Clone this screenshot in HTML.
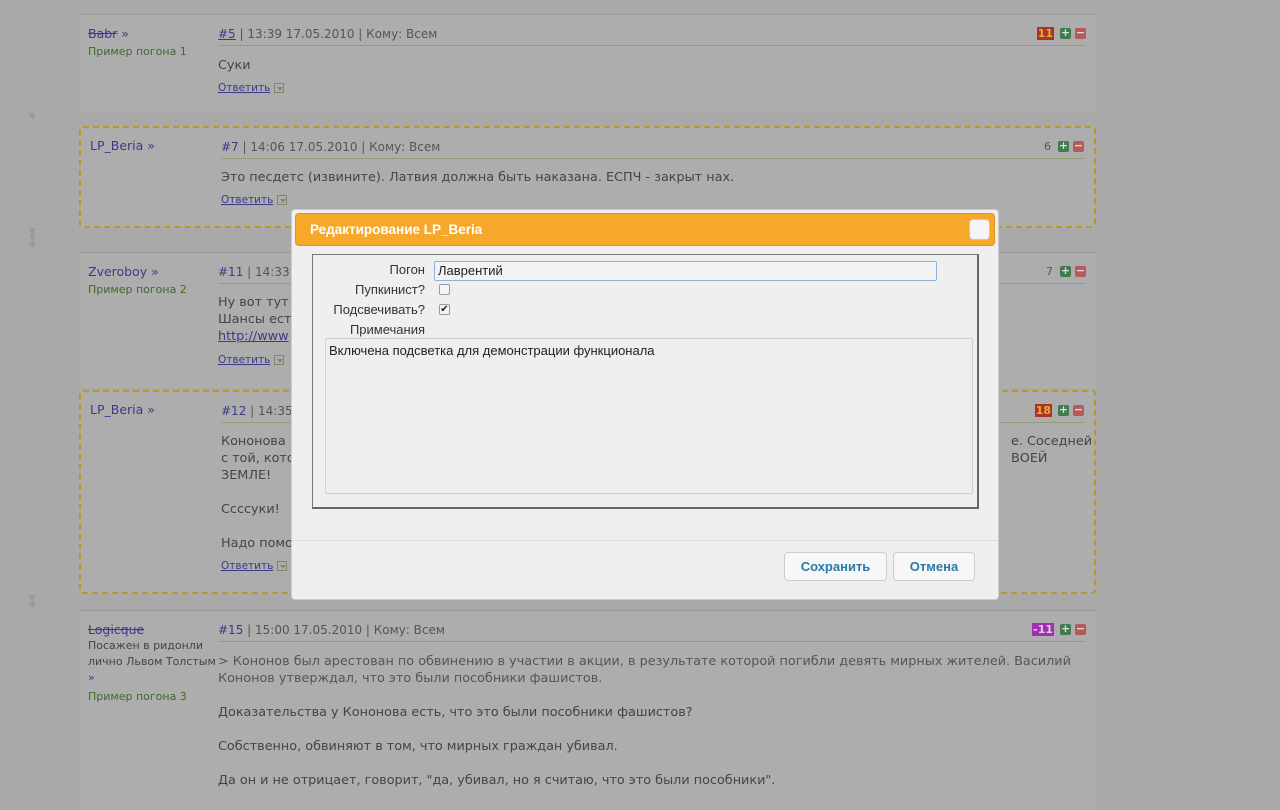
<!DOCTYPE html>
<html><head><meta charset="utf-8"><style>
*{margin:0;padding:0;box-sizing:border-box}
body{width:1280px;height:800px;background:#a9a9a9;position:relative;overflow:hidden;font-family:"DejaVu Sans","Liberation Sans",sans-serif;color:#4a4a4a}
.a{position:absolute}
.post{position:absolute;left:79px;width:1017px;background:#adadad;border-top:1px solid #999}
.dash{border:2px dashed #b59a2a;background:#adadad;border-radius:4px}
.au{position:absolute;left:9px;top:10px;font-size:12.5px;color:#3b3b8a}
.au a{color:#3b3b8a}
.pg{font-size:11px;color:#3d6b2a;margin-top:4px}
.meta{position:absolute;left:139px;right:10px;top:12px;font-size:12px;color:#555;border-bottom:1px solid #939d7a;padding-bottom:4px}
.meta a{color:#3b3b8a}
.txt{position:absolute;left:139px;font-size:12.8px;color:#444;line-height:17px}
.rep{position:absolute;left:139px;font-size:10.5px;color:#3b3b8a;text-decoration:underline}
.tri{display:inline-block;width:10px;height:10px;border:1px solid #7a8a6a;vertical-align:-2px;margin-left:4px;position:relative}
.tri:after{content:"";position:absolute;left:2px;top:3px;border:3px solid transparent;border-top:4px solid #7a8a6a}
.vt{position:absolute;right:10px;top:12px;font-size:11px;display:flex;gap:4px;align-items:center}
.num{padding:0 1px;font-weight:bold;margin-right:2px}
.pl,.mi{width:11px;height:11px;border-radius:2px;color:#ddd;font-size:11px;line-height:10px;text-align:center;font-weight:bold}
.pl{background:#3d7d4e}.mi{background:#b45a5a}
.arr{position:absolute;left:29px;color:#999;font-size:9px;line-height:7px}
.dlg{position:absolute;left:291px;top:209px;width:708px;height:391px;background:#efefef;border-radius:4px;border:1px solid #ccc;font-family:"Liberation Sans",sans-serif}
.hd{position:absolute;left:3px;top:3px;width:700px;height:33px;background:#f5a82a;border:1px solid #e09520;border-radius:4px;color:#fff;font-weight:bold;font-size:13.5px;padding:8px 14px}
.cls{position:absolute;right:4px;top:5px;width:21px;height:21px;background:#f5f5f5;border:1px solid #d8c59a;border-radius:4px}
.fs{position:absolute;left:20px;top:44px;width:667px;height:255px;border:1px solid #777;border-right:2px solid #666;border-bottom:2px solid #666}
.lb{position:absolute;font-size:13px;color:#333;text-align:right;width:110px;left:2px}
.btn{position:absolute;top:342px;height:29px;border:1px solid #ccc;border-radius:4px;background:#f7f7f7;color:#2a7aa8;font-weight:bold;font-size:13px;text-align:center;line-height:27px}
</style></head><body>

<div class="arr" style="top:114px">▼</div>
<div class="arr" style="top:229px">▼<br>▼<br>▼</div>
<div class="arr" style="top:596px">▼<br>▼</div>

<div class="post" style="top:14px;height:99px">
 <div class="au" style="top:11px"><a style="text-decoration:line-through">Babr</a> »<div class="pg">Пример погона 1</div></div>
 <div class="meta"><a href="#">#5</a> | 13:39 17.05.2010 | Кому: Всем</div>
 <div class="vt"><span class="num" style="background:#b0302a;color:#e0b030">11</span><span class="pl">+</span><span class="mi">−</span></div>
 <div class="txt" style="top:42px">Суки</div>
 <div class="rep" style="top:67px">Ответить<span class="tri"></span></div>
</div>

<div class="post dash" style="top:126px;height:102px">
 <div class="au"><a>LP_Beria</a> »</div>
 <div class="meta" style="left:140px"><a>#7</a> | 14:06 17.05.2010 | Кому: Всем</div>
 <div class="vt"><span class="num" style="font-weight:normal;color:#555">6</span><span class="pl">+</span><span class="mi">−</span></div>
 <div class="txt" style="left:140px;top:41px">Это песдетс (извините). Латвия должна быть наказана. ЕСПЧ - закрыт нах.</div>
 <div class="rep" style="left:140px;top:66px">Ответить<span class="tri"></span></div>
</div>

<div class="post" style="top:252px;height:136px">
 <div class="au" style="top:11px"><a>Zveroboy</a> »<div class="pg">Пример погона 2</div></div>
 <div class="meta"><a>#11</a> | 14:33</div>
 <div class="vt"><span class="num" style="font-weight:normal;color:#555">7</span><span class="pl">+</span><span class="mi">−</span></div>
 <div class="txt" style="top:41px">Ну вот тут<br>Шансы ест<br><span style="color:#3b3b8a;text-decoration:underline">http://www</span></div>
 <div class="rep" style="top:101px">Ответить<span class="tri"></span></div>
</div>

<div class="post dash" style="top:390px;height:204px">
 <div class="au"><a>LP_Beria</a> »</div>
 <div class="meta" style="left:140px"><a>#12</a> | 14:35</div>
 <div class="vt"><span class="num" style="background:#b0302a;color:#e0b030">18</span><span class="pl">+</span><span class="mi">−</span></div>
 <div class="txt" style="left:140px;top:41px">Кононова<br>с той, кото<br>ЗЕМЛЕ!<br><br>Ссссуки!<br><br>Надо помо</div>
 <div class="txt" style="left:930px;top:41px">е. Соседней<br>ВОЕЙ</div>
 <div class="rep" style="left:140px;top:168px">Ответить<span class="tri"></span></div>
</div>

<div class="post" style="top:610px;height:200px">
 <div class="au" style="top:11px;width:130px"><a style="text-decoration:line-through">Logicque</a><div style="font-size:11px;color:#444;line-height:16px;margin-top:1px;white-space:nowrap">Посажен в ридонли<br>лично Львом Толстым<br><span style="color:#3b3b8a">»</span></div><div class="pg">Пример погона 3</div></div>
 <div class="meta"><a>#15</a> | 15:00 17.05.2010 | Кому: Всем</div>
 <div class="vt"><span class="num" style="background:#a030b0;color:#e8c8f0">-11</span><span class="pl">+</span><span class="mi">−</span></div>
 <div class="txt" style="top:42px;width:870px;color:#555">&gt; Кононов был арестован по обвинению в участии в акции, в результате которой погибли девять мирных жителей. Василий Кононов утверждал, что это были пособники фашистов.<br><br><span style="color:#444">Доказательства у Кононова есть, что это были пособники фашистов?<br><br>Собственно, обвиняют в том, что мирных граждан убивал.<br><br>Да он и не отрицает, говорит, "да, убивал, но я считаю, что это были пособники".</span></div>
</div>

<div class="dlg">
 <div class="hd">Редактирование LP_Beria<div class="cls"></div></div>
 <div class="fs">
  <div class="lb" style="top:7px">Погон</div>
  <div class="a" style="left:121px;top:6px;width:503px;height:20px;border:1px solid #8fb0d8;border-radius:2px;background:#f3f3f3;font-size:13px;padding:1px 3px;color:#222">Лаврентий</div>
  <div class="lb" style="top:27px">Пупкинист?</div>
  <div class="a" style="left:126px;top:29px;width:11px;height:11px;border:1px solid #999;border-radius:2px;background:#f5f5f5"></div>
  <div class="lb" style="top:47px">Подсвечивать?</div>
  <div class="a" style="left:126px;top:49px;width:11px;height:11px;border:1px solid #999;border-radius:2px;background:#f5f5f5;font-size:10px;line-height:10px;text-align:center;color:#222">✔</div>
  <div class="lb" style="top:67px">Примечания</div>
  <div class="a" style="left:12px;top:83px;width:648px;height:156px;border:1px solid #d0d0d0;border-radius:2px;background:#eee;font-size:13px;padding:4px 3px;color:#222">Включена подсветка для демонстрации функционала</div>
 </div>
 <div class="a" style="left:0;top:330px;width:706px;border-top:1px solid #ddd"></div>
 <div class="btn" style="left:492px;width:103px">Сохранить</div>
 <div class="btn" style="left:601px;width:82px">Отмена</div>
</div>
</body></html>
